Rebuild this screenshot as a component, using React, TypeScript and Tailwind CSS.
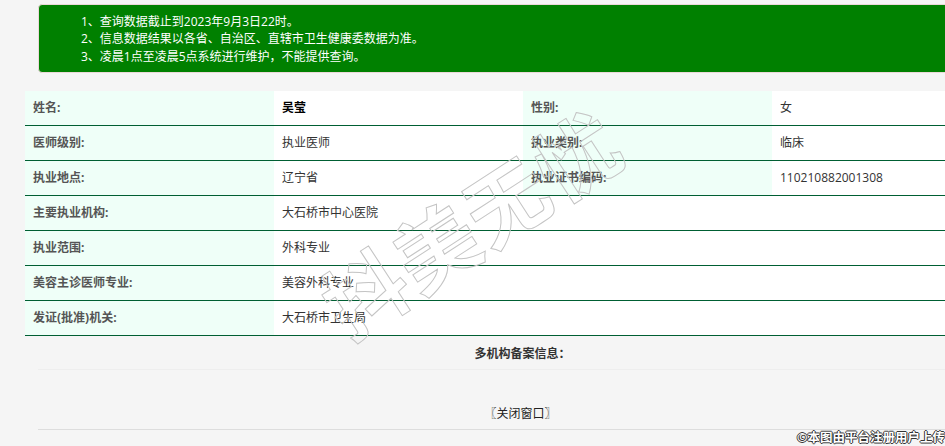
const rows: { label: string; value: string; label2?: string; value2?: string; strong?: boolean }[] = [
  { label: "姓名:", value: "吴莹", label2: "性别:", value2: "女", strong: true },
  { label: "医师级别:", value: "执业医师", label2: "执业类别:", value2: "临床" },
  { label: "执业地点:", value: "辽宁省", label2: "执业证书编码:", value2: "110210882001308" },
  { label: "主要执业机构:", value: "大石桥市中心医院" },
  { label: "执业范围:", value: "外科专业" },
  { label: "美容主诊医师专业:", value: "美容外科专业" },
  { label: "发证(批准)机关:", value: "大石桥市卫生局" },
];

const Label = ({ children }: { children: string }) => (
  <div className="flex items-center bg-[#efFFF8] pl-[8px] font-bold text-[#555555]">{children}</div>
);

export default function App() {
  return (
    <div className="relative h-[446px] w-[945px] overflow-hidden bg-[#f5f5f5] font-['Open_Sans','Noto_Sans_CJK_SC',sans-serif] text-[12px] leading-[17.5px] text-[#333333]">
      {/* Notice */}
      <div className="ml-[38px] mt-[4px] h-[69px] w-[1000px] rounded-[4px] border border-[#ebd8d8] bg-[#008000] pl-[42px] pt-[7.5px] text-white">
        <p>1、查询数据截止到2023年9月3日22时。</p>
        <p>2、信息数据结果以各省、自治区、直辖市卫生健康委数据为准。</p>
        <p>3、凌晨1点至凌晨5点系统进行维护，不能提供查询。</p>
      </div>

      {/* Info table */}
      <div className="ml-[25px] mt-[18px] w-[996px]">
        {rows.map((row) => (
          <div key={row.label} className="grid h-[35px] grid-cols-[249px_249px_249px_249px] border-b border-[#005f33]">
            <Label>{row.label}</Label>
            {row.label2 ? (
              <>
                <div className={`flex items-center bg-white pl-[8px] ${row.strong ? "font-bold text-black" : ""}`}>{row.value}</div>
                <Label>{row.label2}</Label>
                <div className="flex items-center bg-white pl-[8px]">{row.value2}</div>
              </>
            ) : (
              <div className="col-span-3 flex items-center bg-white pl-[8px]">{row.value}</div>
            )}
          </div>
        ))}
      </div>

      {/* Multi-institution records */}
      <div className="ml-[38px] w-[963px]">
        <div className="flex h-[34px] items-center justify-center border-b border-[#eeeeee] pl-[6px] pt-[2px] font-bold">多机构备案信息：</div>
        <div className="flex h-[60px] items-end justify-center border-b border-[#dddddd] pb-[7px] pl-[2px] text-[#222222]">〖关闭窗口〗</div>
      </div>

      {/* Diagonal watermark */}
      <div className="pointer-events-none absolute left-[302px] top-[178px] w-[340px] -rotate-[33deg] whitespace-nowrap font-['Noto_Sans_CJK_SC',sans-serif] text-[82px] leading-[84px] font-bold tracking-[2px] text-transparent [-webkit-text-stroke:1px_#c4c4c4]">
        抖美无忧
      </div>

      {/* Upload credit */}
      <div className="absolute bottom-0 right-0 text-[12.5px] leading-[16px] font-bold text-white [text-shadow:1px_0_#333,-1px_0_#333,0_1px_#333,0_-1px_#333]">
        ©本图由平台注册用户上传
      </div>
    </div>
  );
}
